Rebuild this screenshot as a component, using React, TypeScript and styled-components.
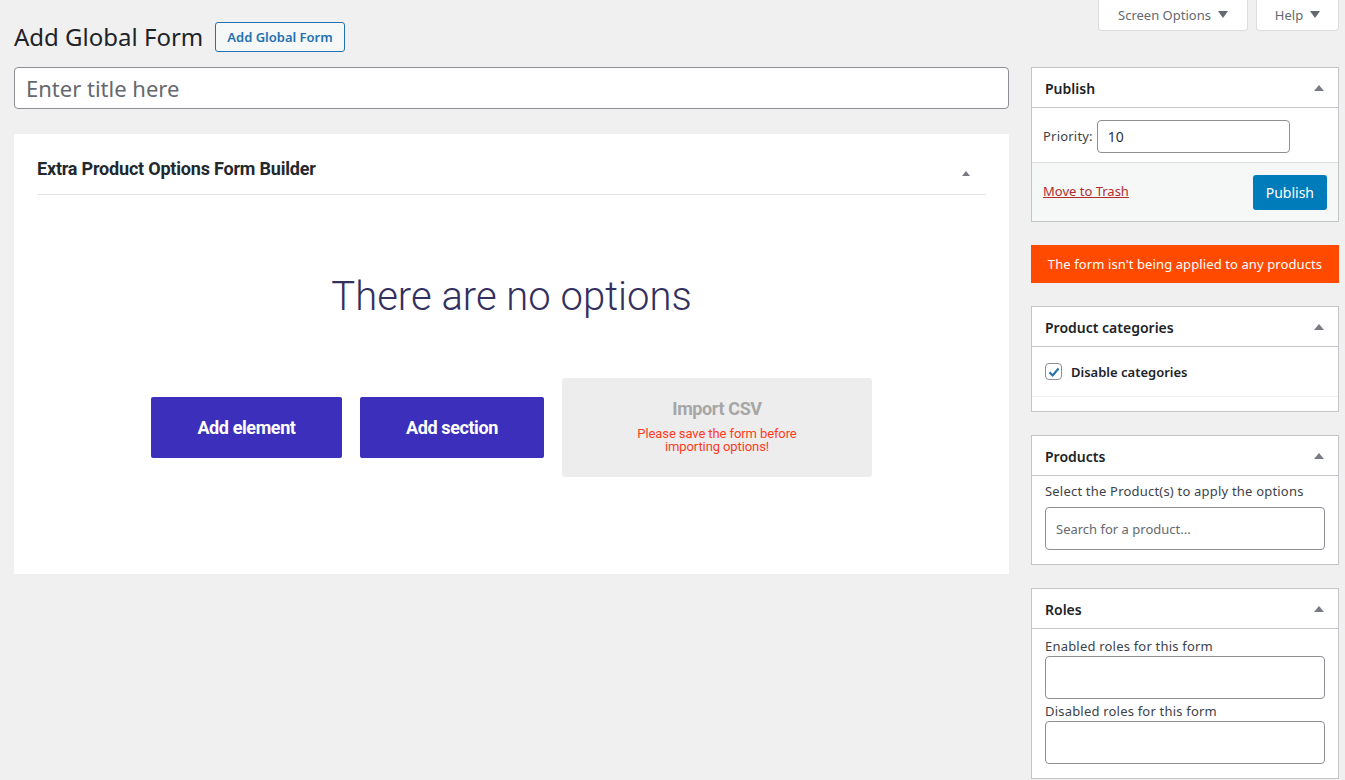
import { createGlobalStyle, styled } from "styled-components";

const GlobalStyle = createGlobalStyle`
    html, body {
        margin: 0;
        padding: 0;
        background: #f0f0f1;
    }
    body {
        font-family: "Noto Sans", "Open Sans", sans-serif;
        font-size: 13px;
        color: #3c434a;
    }
    * {
        box-sizing: border-box;
    }
`;

const Page = styled.div`
    width: 1345px;
    height: 780px;
    overflow: hidden;
    position: relative;
    padding: 0 6px 0 14px;
`;

const ScreenMeta = styled.div`
    position: absolute;
    top: 0;
    right: 6px;
    display: flex;
    gap: 8px;
`;

const MetaTab = styled.button<{ $w: number }>`
    width: ${(p) => p.$w}px;
    height: 31px;
    border: 1px solid #dcdcde;
    border-top: none;
    border-radius: 0 0 4px 4px;
    background: #fff;
    color: #646970;
    font-family: inherit;
    font-size: 13px;
    display: flex;
    align-items: center;
    justify-content: center;
    gap: 7px;
    padding: 0 0 1px;

    &::after {
        content: "";
        border-left: 5px solid transparent;
        border-right: 5px solid transparent;
        border-top: 7px solid #646970;
    }
`;

const Columns = styled.div`
    display: grid;
    grid-template-columns: 995px 308px;
    gap: 22px;
`;

const Main = styled.div`
    display: flex;
    flex-direction: column;
`;

const TitleRow = styled.div`
    display: flex;
    align-items: center;
    gap: 12px;
    height: 67px;
    padding-top: 6px;
`;

const Heading = styled.h1`
    margin: 0;
    font-size: 24px;
    font-weight: 400;
    color: #1d2327;
    line-height: 1.3;
`;

const OutlineButton = styled.button`
    height: 30px;
    padding: 0 11px;
    border: 1px solid #2271b1;
    border-radius: 3px;
    background: #f6f7f7;
    color: #2271b1;
    font-family: inherit;
    font-size: 13px;
    font-weight: 600;
`;

const TitleInput = styled.input`
    width: 995px;
    height: 42px;
    border: 1px solid #8c8f94;
    border-radius: 4px;
    background: #fff;
    padding: 3px 11px;
    font-family: inherit;
    font-size: 22px;
    color: #2c3338;

    &::placeholder {
        color: #646970;
    }
`;

const Builder = styled.section`
    margin-top: 25px;
    height: 440px;
    background: #fff;
    padding: 0 23px;
    font-family: Roboto, sans-serif;
`;

const BuilderHead = styled.div`
    height: 61px;
    display: flex;
    align-items: center;
    justify-content: space-between;
    border-bottom: 1px solid #e5e5e5;
    padding-top: 8px;
`;

const BuilderTitle = styled.h2`
    margin: 0;
    font-size: 18px;
    font-weight: 700;
    letter-spacing: -0.2px;
    color: #23282d;
`;

const Caret = styled.span<{ $size?: number }>`
    display: block;
    width: 0;
    height: 0;
    border-left: ${(p) => p.$size ?? 5}px solid transparent;
    border-right: ${(p) => p.$size ?? 5}px solid transparent;
    border-bottom: ${(p) => (p.$size ?? 5) + 1}px solid #787c82;
`;

const BuilderCaret = styled(Caret)`
    margin: 10px 16px 0 0;
`;

const Empty = styled.p`
    margin: 78px 0 0;
    text-align: center;
    font-size: 40px;
    font-weight: 300;
    color: #33305e;
    line-height: 1.2;
`;

const ActionRow = styled.div`
    display: flex;
    justify-content: center;
    align-items: center;
    gap: 18px;
    margin-top: 57px;
`;

const BigButton = styled.button<{ $w: number }>`
    width: ${(p) => p.$w}px;
    height: 61px;
    border: none;
    border-radius: 2px;
    background: #3c2fbb;
    color: #fff;
    font-family: Roboto, sans-serif;
    font-size: 18px;
    font-weight: 700;
    letter-spacing: -0.4px;
`;

const ImportBox = styled.div`
    width: 310px;
    height: 99px;
    border-radius: 3px;
    background: #ededed;
    display: flex;
    flex-direction: column;
    align-items: center;
    padding-top: 20px;
`;

const ImportTitle = styled.span`
    font-size: 18px;
    font-weight: 700;
    color: #a6a6a6;
    letter-spacing: -0.4px;
`;

const ImportNote = styled.span`
    margin-top: 8px;
    font-size: 13px;
    line-height: 13px;
    color: #ff3b1d;
    text-align: center;
    width: 190px;
    letter-spacing: -0.1px;
`;

const Side = styled.aside`
    padding-top: 67px;
    display: flex;
    flex-direction: column;
    gap: 23px;
`;

const Box = styled.div<{ $h?: number }>`
    background: #fff;
    border: 1px solid #c3c4c7;
    ${(p) => (p.$h ? `height: ${p.$h}px;` : "")}
    overflow: hidden;
`;

const BoxHead = styled.div`
    height: 40px;
    display: flex;
    align-items: center;
    justify-content: space-between;
    padding: 1px 14px 0 13px;
    border-bottom: 1px solid #c3c4c7;
`;

const BoxTitle = styled.h3`
    margin: 0;
    font-size: 14px;
    font-weight: 600;
    color: #1d2327;
`;

const PriorityRow = styled.div`
    height: 55px;
    display: flex;
    align-items: center;
    gap: 4px;
    padding: 3px 11px 0;
    border-bottom: 1px solid #dcdcde;
`;

const Field = styled.input<{ $w?: number; $h: number }>`
    width: ${(p) => (p.$w ? `${p.$w}px` : "100%")};
    height: ${(p) => p.$h}px;
    border: 1px solid #8c8f94;
    border-radius: 4px;
    background: #fff;
    padding: 0 10px;
    font-family: inherit;
    font-size: 14px;
    color: #2c3338;

    &::placeholder {
        color: #646970;
        font-size: 13px;
    }
`;

const Area = styled.div`
    height: 43px;
    border: 1px solid #8c8f94;
    border-radius: 4px;
    background: #fff;
`;

const PublishFoot = styled.div`
    height: 58px;
    background: #f6f7f7;
    display: flex;
    align-items: center;
    justify-content: space-between;
    padding: 0 11px;
`;

const TrashLink = styled.a`
    color: #b32d2e;
    text-decoration: underline;
    font-size: 13px;
    padding-bottom: 2px;
`;

const PrimaryButton = styled.button`
    height: 35px;
    padding: 0 13px;
    border: none;
    border-radius: 3px;
    background: #007cba;
    color: #fff;
    font-family: inherit;
    font-size: 14px;
`;

const Notice = styled.div`
    height: 38px;
    background: #ff4a00;
    color: #fff;
    display: flex;
    align-items: center;
    justify-content: center;
    font-size: 13px;
    letter-spacing: 0.1px;
`;

const CheckRow = styled.label`
    display: flex;
    align-items: center;
    gap: 9px;
    height: 50px;
    padding: 0 13px;
    border-bottom: 1px solid #f0f0f1;
    font-size: 13px;
    font-weight: 600;
    color: #1d2327;
`;

const Check = styled.span`
    width: 17px;
    height: 17px;
    border: 1px solid #8c8f94;
    border-radius: 4px;
    display: flex;
    align-items: center;
    justify-content: center;
`;

const BoxBody = styled.div<{ $gap: number; $top: number }>`
    padding: ${(p) => p.$top}px 13px 14px;
    display: flex;
    flex-direction: column;
    gap: ${(p) => p.$gap}px;
`;

const Label = styled.span`
    font-size: 13px;
    color: #3c434a;
    line-height: 17px;
    letter-spacing: 0.2px;
`;

const Stack = styled.div`
    display: flex;
    flex-direction: column;
    gap: 1px;
`;

const App = () => {
    return (
        <Page>
            <GlobalStyle />
            <ScreenMeta>
                <MetaTab $w={150}>Screen Options</MetaTab>
                <MetaTab $w={83}>Help</MetaTab>
            </ScreenMeta>
            <Columns>
                <Main>
                    <TitleRow>
                        <Heading>Add Global Form</Heading>
                        <OutlineButton>Add Global Form</OutlineButton>
                    </TitleRow>
                    <TitleInput placeholder="Enter title here" />
                    <Builder>
                        <BuilderHead>
                            <BuilderTitle>Extra Product Options Form Builder</BuilderTitle>
                            <BuilderCaret $size={4} />
                        </BuilderHead>
                        <Empty>There are no options</Empty>
                        <ActionRow>
                            <BigButton $w={191}>Add element</BigButton>
                            <BigButton $w={184}>Add section</BigButton>
                            <ImportBox>
                                <ImportTitle>Import CSV</ImportTitle>
                                <ImportNote>Please save the form before importing options!</ImportNote>
                            </ImportBox>
                        </ActionRow>
                    </Builder>
                </Main>
                <Side>
                    <Box>
                        <BoxHead>
                            <BoxTitle>Publish</BoxTitle>
                            <Caret />
                        </BoxHead>
                        <PriorityRow>
                            <Label>Priority:</Label>
                            <Field $w={193} $h={33} defaultValue="10" />
                        </PriorityRow>
                        <PublishFoot>
                            <TrashLink href="#">Move to Trash</TrashLink>
                            <PrimaryButton>Publish</PrimaryButton>
                        </PublishFoot>
                    </Box>
                    <Notice>The form isn't being applied to any products</Notice>
                    <Box $h={106}>
                        <BoxHead>
                            <BoxTitle>Product categories</BoxTitle>
                            <Caret />
                        </BoxHead>
                        <CheckRow>
                            <Check>
                                <svg width="14" height="14" viewBox="0 0 20 20">
                                    <path d="M3.5 10.5l4.5 4.5 8.5-10" fill="none" stroke="#2271b1" strokeWidth="3" />
                                </svg>
                            </Check>
                            Disable categories
                        </CheckRow>
                    </Box>
                    <Box>
                        <BoxHead>
                            <BoxTitle>Products</BoxTitle>
                            <Caret />
                        </BoxHead>
                        <BoxBody $gap={7} $top={7}>
                            <Label>Select the Product(s) to apply the options</Label>
                            <Field $h={43} placeholder="Search for a product..." />
                        </BoxBody>
                    </Box>
                    <Box>
                        <BoxHead>
                            <BoxTitle>Roles</BoxTitle>
                            <Caret />
                        </BoxHead>
                        <BoxBody $gap={4} $top={9}>
                            <Stack>
                                <Label>Enabled roles for this form</Label>
                                <Area />
                            </Stack>
                            <Stack>
                                <Label>Disabled roles for this form</Label>
                                <Area />
                            </Stack>
                        </BoxBody>
                    </Box>
                </Side>
            </Columns>
        </Page>
    );
};

export default App;
